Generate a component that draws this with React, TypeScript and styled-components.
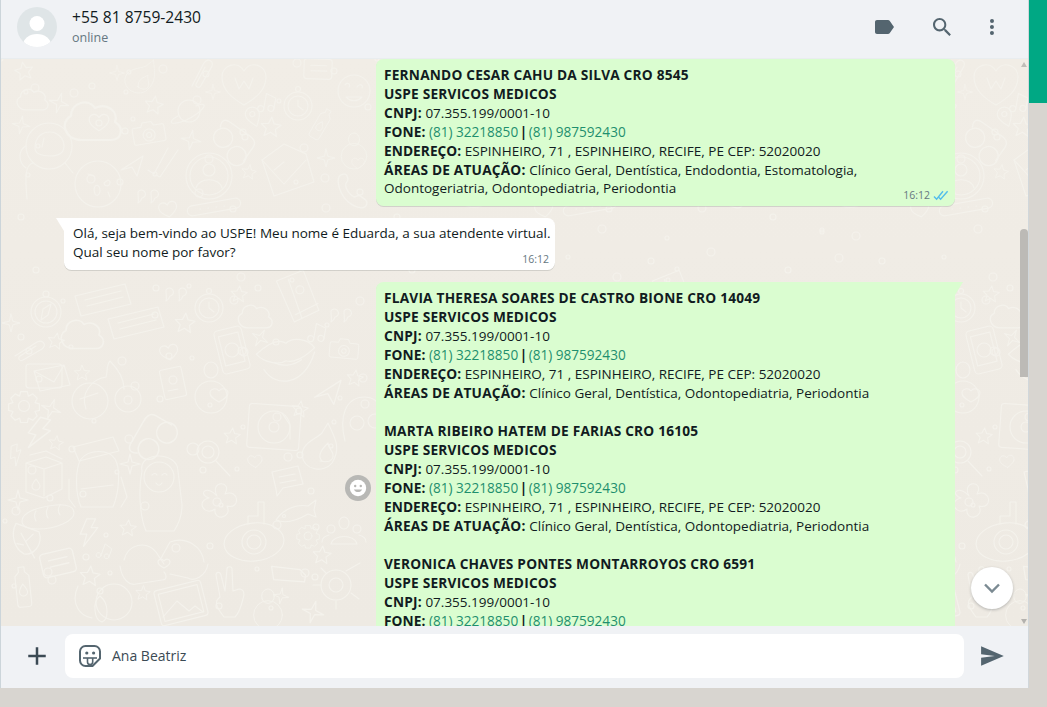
import React from "react";
import styled, { createGlobalStyle } from "styled-components";

const Global = createGlobalStyle`
  html, body { margin: 0; padding: 0; height: 707px; overflow: hidden; background: #d8d5d0; }
  body { font-family: "Open Sans", "Noto Sans", "Liberation Sans", sans-serif; }
  * { box-sizing: border-box; }
`;

const Page = styled.div`
  display: flex;
  align-items: flex-start;
  width: 1047px;
  height: 707px;
  background: #d8d5d0;
`;
const Panel = styled.main`
  width: 1029px;
  height: 688px;
  display: flex;
  flex-direction: column;
  border-left: 1px solid #ccd5da;
  border-right: 1px solid #d1d7db;
  background: #efeae2;
`;
const AccentStrip = styled.div`
  width: 18px;
  height: 103px;
  background: #00a884;
`;
const Header = styled.header`
  height: 59px;
  flex: none;
  display: flex;
  align-items: center;
  padding: 0 24px 4px 16px;
  background: #f0f2f5;
  border-bottom: 1px solid #e9edef;
`;
const Avatar = styled.svg`
  width: 40px;
  height: 40px;
  flex: none;
`;
const Contact = styled.div`
  margin-left: 15px;
  flex: 1;
  margin-top: -1px;
`;
const ContactName = styled.div`
  font-size: 15.6px;
  line-height: 21px;
  color: #111b21;
`;
const ContactStatus = styled.div`
  font-size: 12.5px;
  line-height: 19px;
  color: #667781;
`;
const IconSlot = styled.span<{ $gap?: number; $nudge?: number; $color?: string }>`
  display: flex;
  flex: none;
  justify-content: center;
  margin-left: ${(p) => p.$gap ?? 0}px;
  margin-top: ${(p) => p.$nudge ?? 0}px;
  color: ${(p) => p.$color ?? "#54656f"};
`;
const Chat = styled.section`
  position: relative;
  flex: 1;
  min-height: 0;
  overflow: hidden;
  background: linear-gradient(#f1ede6, #eeeae3);
`;
const Doodles = styled.svg`
  position: absolute;
  inset: 0;
  width: 100%;
  height: 100%;
`;
const Messages = styled.div`
  position: relative;
  display: flex;
  flex-direction: column;
  gap: 12px;
  padding: 0 73px 0 63px;
`;
const Bubble = styled.article<{ $out?: boolean; $tail?: boolean; $w: number }>`
  position: relative;
  flex: none;
  width: ${(p) => p.$w}px;
  align-self: ${(p) => (p.$out ? "flex-end" : "flex-start")};
  padding: 5.5px 6px 8.5px ${(p) => (p.$out ? 8 : 9)}px;
  font-size: 13.5px;
  line-height: 19px;
  color: #111b21;
  white-space: pre;
  background: ${(p) => (p.$out ? "#dafdd0" : "#ffffff")};
  border-radius: 7.5px;
  border-top-left-radius: ${(p) => (p.$tail && !p.$out ? 0 : 7.5)}px;
  border-top-right-radius: ${(p) => (p.$tail && p.$out ? 0 : 7.5)}px;
  box-shadow: 0 1px 0.5px rgba(11, 20, 26, 0.13);
  &::before {
    content: "";
    display: ${(p) => (p.$tail ? "block" : "none")};
    position: absolute;
    top: 0;
    width: 8px;
    height: 13px;
    background: inherit;
    ${(p) =>
      p.$out
        ? "right: -8px; clip-path: polygon(0 0, 100% 0, 0 100%);"
        : "left: -8px; clip-path: polygon(0 0, 100% 0, 100% 100%);"}
  }
`;
const Line = styled.div`
  height: 19px;
`;
const Strong = styled.b`
  font-weight: 700;
  font-size: 13.7px;
  letter-spacing: 0.2px;
`;
const Label = styled(Strong)`
  letter-spacing: 0.05px;
`;
const Phone = styled.span`
  font-size: 13.6px;
  color: #1f8f6e;
`;
const PhoneSeparator = styled.b`
  font-weight: 700;
  margin: 0 -2px;
`;
const Meta = styled.div`
  position: absolute;
  right: 6px;
  bottom: 3px;
  display: flex;
  align-items: center;
  gap: 3px;
  font-size: 10.5px;
  line-height: 15px;
  color: #667781;
`;
const ReactionBadge = styled.div`
  position: absolute;
  left: -31px;
  top: 193px;
  width: 26px;
  height: 26px;
  border-radius: 50%;
  background: #b8b8b5;
  display: flex;
  align-items: center;
  justify-content: center;
`;
const ScrollArrow = styled.div<{ $down?: boolean }>`
  position: absolute;
  right: 1px;
  ${(p) => (p.$down ? "bottom: 2px;" : "top: 3px;")}
  width: 0;
  height: 0;
  border-left: 3.5px solid transparent;
  border-right: 3.5px solid transparent;
  ${(p) => (p.$down ? "border-top: 5px solid #b4b2ae;" : "border-bottom: 5px solid #c0bdb8;")}
`;
const ScrollThumb = styled.div`
  position: absolute;
  right: 0;
  top: 170px;
  width: 8px;
  height: 148px;
  border-radius: 4px 4px 0 0;
  background: #bcbab6;
`;
const FloatingDown = styled.button`
  position: absolute;
  right: 15px;
  bottom: 17px;
  width: 42px;
  height: 42px;
  padding: 0;
  border: 0;
  border-radius: 50%;
  background: #fff;
  display: flex;
  align-items: center;
  justify-content: center;
  box-shadow: 0 1px 3px rgba(11, 20, 26, 0.25);
`;
const Footer = styled.footer`
  height: 62px;
  flex: none;
  display: flex;
  align-items: center;
  padding: 0 0 2px 21px;
  background: #f0f2f5;
`;
const Composer = styled.div`
  margin-left: 13px;
  width: 899px;
  height: 44px;
  flex: none;
  display: flex;
  align-items: center;
  padding: 0 0 1px 13px;
  gap: 10px;
  border-radius: 8px;
  background: #fff;
  font-size: 14px;
  color: #3b4a54;
`;

const contact = (name: string, areas: string[]) => (
  <>
    <Line><Strong>{name}</Strong></Line>
    <Line><Strong>USPE SERVICOS MEDICOS</Strong></Line>
    <Line><Strong>CNPJ:</Strong> 07.355.199/0001-10</Line>
    <Line><Label>FONE:</Label> <Phone>(81) 32218850</Phone> <PhoneSeparator>|</PhoneSeparator> <Phone>(81) 987592430</Phone></Line>
    <Line><Label>ENDEREÇO:</Label> ESPINHEIRO, 71 , ESPINHEIRO, RECIFE, PE CEP: 52020020</Line>
    {areas.map((a, i) => (
      <Line key={a}>{i === 0 && <Strong>ÁREAS DE ATUAÇÃO: </Strong>}{a}</Line>
    ))}
  </>
);

const AREAS = ["Clínico Geral, Dentística, Odontopediatria, Periodontia"];

/* Wallpaper doodles: each drawing is centred on 0,0 */
const SHAPES: Record<string, React.ReactNode> = {
  star: <path d="M0-9l2.6 6 6.4.6-4.8 4.2 1.4 6.4L0 4.8l-5.6 3.4L-4.2 1.8-9-2.4l6.4-.6z" />,
  spark: <path d="M0-10l2 8 8 2-8 2-2 8-2-8-8-2 8-2z" />,
  heart: <path d="M0 8c-5-3-9-6-9-10 0-5 6-7 9-2 3-5 9-3 9 2 0 4-4 7-9 10z" />,
  bigheart: <><path d="M0 23c-12-7-22-15-22-28 0-12 15-17 22-6 7-11 22-6 22 6 0 13-10 21-22 28z" /><path d="M-9-4l4 11 5-8 5 8 4-11" /></>,
  cloud: <path d="M-9 9c-8 0-11-9-5-12 0-7 9-9 12-4 6-3 12 2 10 7 5 3 3 9-2 9z" />,
  note: <><path d="M-28-6l50-12 6 20-50 12z" /><path d="M-18-2l36-9M-16 4l36-9" /></>,
  paper: <><rect x="-14" y="-10" width="28" height="20" rx="3" transform="rotate(-18)" /><path d="M-8-1l15-5M-6 4l15-5" /></>,
  camera: <><path d="M-14-8h7l2-4h9l2 4h8a2 2 0 0 1 2 2v13a2 2 0 0 1-2 2h-28a2 2 0 0 1-2-2V-6a2 2 0 0 1 2-2z" /><circle r="6" cy="1" /><circle r="2.5" cy="1" /></>,
  clock: <><circle r="14" /><circle r="10" /><path d="M0-6v6l5 4" /><circle cy="-17" r="2.5" /></>,
  face: <><circle r="16" /><path d="M-9-6c3-4 6 0 4 2M3-4c2-4 7-2 5 1M-8 6c5 5 11 5 16 0z" /></>,
  planet: <><circle r="11" /><path d="M-11 5c-6 3-8 6-6 7 3 1 12-1 20-6s13-10 12-12c-1-1-4-1-8 1" /></>,
  pin: <><path d="M0 11c-4-5-7-9-7-13a7 7 0 0 1 14 0c0 4-3 8-7 13z" /><circle cy="-2" r="2.5" /></>,
  music: <><path d="M-4 8V-8l10 3v11" /><circle cx="-7" cy="8" r="3" /><circle cx="3" cy="6" r="3" /></>,
  bottle: <><path d="M-3-20h6v5l4 4v28a3 3 0 0 1-3 3h-8a3 3 0 0 1-3-3v-28l4-4z" /><path d="M0-3c-3 4-4 6-4 8a4 4 0 0 0 8 0c0-2-1-4-4-8z" /></>,
  envelope: <><path d="M-26-6l22-16 22 10 8 28-40 14z" /><path d="M-26-6l22 24 22-24M-14 4L-4-4" /></>,
  mail: <><rect x="-20" y="-13" width="36" height="24" rx="3" /><path d="M-12-6l30-6 6 20-30 6zM-12-6l20 11 10-17" /></>,
  glasses: <><circle cx="-9" cy="3" r="8" /><circle cx="9" cy="9" r="8" /><path d="M-16-3c-3-6 0-8 4-8h20c6 0 8 2 8 6v14" /></>,
  profile: <><circle r="23" /><circle r="19" /><circle cy="-6" r="6" /><path d="M-13 12c3-11 23-11 26 0" /></>,
  person: <><ellipse cy="-12" rx="7" ry="8" /><circle cy="9" r="16" /></>,
  plane: <path d="M-12 6L10-8 4 12-1 3z" />,
  check: <><path d="M-16 8l6 4L4-14M-8 13l4 2L14-12" /></>,
  phone: <><rect x="-14" y="-22" width="28" height="44" rx="4" transform="rotate(-14)" /><rect x="-10" y="-16" width="20" height="30" transform="rotate(-14)" /><circle r="7" /></>,
  handset: <path d="M-8-14c-6 0-6 6-4 12 3 9 10 15 18 16 5 0 6-5 3-7l-4-3c-2-1-3 1-5 1-4-2-7-7-7-10 0-2 2-3 2-5l-1-3c-1-1-1-1-2-1z" />,
  quote: <><path d="M-10-7a4 4 0 1 1 4 6c-1 3-2 4-4 5 1-3 0-5 0-11zM3-7a4 4 0 1 1 4 6c-1 3-2 4-4 5 1-3 0-5 0-11z" /></>,
  band: <><rect x="-27" y="-5" width="54" height="10" rx="5" transform="rotate(-10)" /><path d="M-14 2h.5M-6 1h.5M2 0h.5M10-1h.5" /></>,
  astro: <><circle r="23" /><path d="M-14 2c0-12 8-16 15-16s14 6 14 14-6 10-14 10-15-2-15-8zM-23 0c-8 4-8 16 0 22M-16 17c-8 2-8 14-6 36M16 17l8 10" /><path d="M-5-8l-2 9" /></>,
  moon: <><circle r="23" /><path d="M-10-10l6 2M10-4a3 3 0 1 1-4 3zM-4 6a3 5 0 1 1 1 4zM10 8l2 5" /></>,
  compass: <><circle r="15" /><circle r="11" /><circle cy="-18" r="3" /><path d="M5-8L2 3-5 8l2-11z" /></>,
  map: <><path d="M-20-20l28-7 10 42-26 8zM-8-20l8 40" /><circle cx="2" cy="-8" r="4" /><path d="M-6 16l24-8" /></>,
  clip: <path d="M-14 6L8-8c6-3 10 3 5 7L-6 10c-3 2-6-2-3-4L7-4" />,
  lips: <><path d="M-27-8C-14-20-6-22 0-18 6-24 20-22 26-14 16-4 6 0 0-2-6 2-20 0-27-8z" /><path d="M-20 6C-10 22 16 22 26-10M-10 0c6 3 16 3 24-3" /></>,
  scooter: <><path d="M-18 22c-6-16 6-30 20-32 2-6 0-12 4-16 6 6 14 16 14 28" /><circle cx="-14" cy="14" r="18" /><circle cx="24" cy="12" r="13" /><path d="M-24 12l18-6" /></>,
  book: <><rect x="-11" y="-15" width="22" height="30" rx="2" transform="rotate(-12)" /><circle r="4" cy="-3" /><path d="M-5 8l10-2" /></>,
  personheart: <><ellipse cy="-22" rx="7" ry="8" /><circle cy="5" r="16" /><path d="M8 10c-5-3-9-5-9-9 0-4 6-6 9-2 3-4 9-2 9 2 0 4-4 6-9 9z" /></>,
  gear: <><circle r="5" /><path d="M-3-13h6l1 4 4-2 4 4-2 4 4 1v6l-4 1 2 4-4 4-4-2-1 4h-6l-1-4-4 2-4-4 2-4-4-1v-6l4-1-2-4 4-4 4 2z" /></>,
  vinyl: <><rect x="-26" y="-22" width="52" height="44" rx="3" transform="rotate(4)" /><circle r="16" /><circle r="5" /><path d="M8-14l8 12v14" /></>,
  headglass: <><path d="M-14 24C-20 0-14-20 6-20c14 0 22 14 20 44" /><circle cx="-2" cy="6" r="7" /><circle cx="16" cy="4" r="7" /></>,
  bolt: <path d="M-2-12L-8 2h6l-3 11L8-4H2l4-8z" />,
  flame: <><path d="M4-24c6 14 14 24 4 40C0 26-20 24-22 8c0-12 14-16 20-22 2-4 4-6 6-10z" /><path d="M-2 14C-8 8 0 0 4-4c0 6 8 10 4 16-3 4-8 3-12 2z" /></>,
  lens: <><circle r="11" /><circle r="6" /><circle cx="-15" cy="-3" r="6" /><path d="M8 9l14 15" /></>,
  backpack: <><path d="M-18-18c-6 10-6 34 0 48h32c6-14 8-38 2-48-6-10-26-10-34 0z" /><path d="M-26-30l40-10 6 14-40 10zM-30 2v20l6 8M22 0l6 20-6 10M-18 12l32-4" /></>,
  milk: <><path d="M-18-14l20-6 16 6v26l-18 9-18-6zM-18-14L0-8v27M0-8l18-6M-14-22L2-26l16 8" /><path d="M-8 2c-3 4-4 6-4 7a4 4 0 0 0 8 0c0-1-1-3-4-7z" /></>,
  baby: <><path d="M-16-22c-4-20 36-20 36 0l4 34c0 12-4 20-8 26h-28c-6-14-8-40-4-60z" /><circle cy="-16" cx="1" r="15" /><path d="M-6-18c2-2 4-2 5 0M4-18c2-2 4-2 5 0M-2-10c2 3 4 3 6 0" /></>,
  chat: <><path d="M-16-10l26-6 5 18-20 4-6 8-1-7z" /><path d="M-9-5l16-3M-8 1l16-3" /></>,
  flower: <><circle r="4" /><path d="M0-6c-8-16 16-16 8-2 14-6 16 16 2 12 6 12-14 16-12 3-10 8-20-8-6-11-12-4-2-14 8-2z" /></>,
  bread: <><path d="M-26 6c0-8 14-14 34-16 12-1 18 2 18 8 0 8-18 16-36 16-10 0-16-2-16-8z" /><path d="M-12-4c-2 3-2 6 0 10M0-8c-2 4-2 8 0 11M12-10c-2 3-2 7 0 10" /></>,
  fish: <><path d="M-18 8C-10-4 4-8 14-6l8-6-2 10 2 7-8-3C4 8-8 12-18 8z" /><circle cx="-10" cy="4" r="1.5" /></>,
  eye: <><ellipse cx="0" rx="30" ry="19" transform="rotate(-6)" /><circle r="12" /><circle r="7" /><path d="M-6-18v-8h10v-14l6 0v22" /></>,
  people: <><ellipse cy="-9" rx="5" ry="6" /><path d="M-13 12c2-10 24-10 26 0z" /><circle cx="-13" cy="-3" r="4" /><circle cx="13" cy="-3" r="4" /><path d="M-22 10c0-4 3-6 7-7M22 10c0-4-3-6-7-7" /></>,
  leaf: <><path d="M-12-16l22 4c6 12-2 22-10 22C-8 8-16-4-12-16zM-6-8l16 20M0-2l5-7M-2 2h-6" /></>,
  hands: <><path d="M-40 0c4-16 22-20 32-8l8 12M40 2c-2-16-18-26-34-20L-4 0" /><path d="M-44 6c2 14 10 20 16 18l26-4c6 0 4-6 2-8M44 4c-2 12-14 18-20 14L6 14" /><path d="M0 8c-4-2-6-4-6-6 0-3 4-4 6-1 2-3 6-2 6 1 0 2-2 4-6 6z" /></>,
  tag: <path d="M-15-6l26 3 5 5-1 6-28-2z" />,
  turtle: <><circle r="15" /><circle r="7" /><path d="M10-14l14-8M-15 0h-8M0 16v8M15 8l8 6M-10-12l-5-5" /></>,
  dog: <><circle cx="6" r="18" /><path d="M-8-6c-8 6-6 24 2 26 6-2 8-18-2-26zM-30-16c-8 18 2 30 14 32" /></>,
  picture: <><rect x="-24" y="-18" width="48" height="36" rx="3" transform="rotate(-14)" /><rect x="-20" y="-14" width="40" height="28" transform="rotate(-14)" /><path d="M-18 14L-4-2 8 8l6-5 8 6" /></>,
  peace: <path d="M-10 22c-6-8-10-14-6-18l2-2-4-22c0-3 4-4 5 0l4 16 2-22c0-3 5-3 5 0l1 22 6-2c5 0 6 5 4 10-2 8-4 14-8 18z" />,
};

const ITEMS: [string, number, number, number?, number?][] = [
  ["star", 23, 12, -10], ["spark", 116, 14, 0, 0.75], ["flame", 143, 18, 20, 0.8], ["clip", 200, 15, -30],
  ["bigheart", 243, 23], ["paper", 317, 10, 20], ["face", 353, 32], ["cloud", 35, 41, 0, 1.1], ["spark", 58, 44, 15],
  ["planet", 188, 52], ["star", 153, 46, 10], ["pin", 252, 57, -20], ["music", 268, 43, 10], ["clock", 297, 47],
  ["bottle", 320, 65, 30, 0.8], ["spark", 212, 33, 0, 0.75], ["cloud", 98, 63, 0, 2], ["heart", 98, 63, 0, 1.1],
  ["camera", 148, 75, -10], ["spark", 20, 66, 10, 0.9], ["astro", 48, 87], ["moon", 97, 125], ["glasses", 233, 82, 35, 1.2],
  ["star", 270, 68, 5, 1.1], ["spark", 190, 81, 10], ["envelope", 287, 107], ["spark", 325, 99, 0, 0.9],
  ["person", 353, 90, 0, 0.8], ["heart", 357, 104, 0, 0.7], ["profile", 208, 117], ["plane", 132, 105], ["check", 163, 103],
  ["star", 248, 113, 10, 0.8], ["handset", 353, 132, 0, 1.2], ["quote", 147, 140], ["heart", 167, 150, -10],
  ["band", 213, 148], ["compass", 45, 253], ["note", 102, 243], ["note", 135, 266], ["clock", 208, 249], ["map", 298, 239, -8],
  ["star", 238, 235, 5, 0.9], ["star", 184, 264, 5, 1.1], ["cloud", 258, 258, 0, 1.2], ["quote", 340, 259], ["quote", 175, 238],
  ["spark", 10, 264, 0, 0.9], ["cloud", 86, 276, 0, 1.5], ["star", 55, 282, 10, 0.9], ["clip", 28, 291], ["phone", 231, 291],
  ["spark", 259, 279, 30, 0.9], ["music", 318, 273, 10], ["camera", 343, 291, 5, 0.9], ["lips", 285, 304, 0, 1.1], ["heart", 168, 293, -10],
  ["mail", 45, 318], ["star", 81, 314, 0, 0.85], ["scooter", 103, 328], ["book", 172, 324], ["personheart", 210, 333],
  ["plane", 328, 331, 0, 1.2], ["star", 354, 319, 8, 0.9], ["gear", 23, 347, 0, 1.1], ["spark", 50, 350, 20], ["vinyl", 273, 368],
  ["headglass", 358, 358], ["star", 299, 350, 8, 0.9], ["glasses", 150, 378, -60, 1.3], ["lens", 207, 393], ["star", 231, 377, 5, 0.9],
  ["bolt", 38, 374, 15, 1.3], ["star", 55, 384, 10, 0.8], ["flame", 323, 388], ["bolt", 15, 396, -20, 0.8], ["heart", 254, 402, -5, 0.8],
  ["backpack", 98, 418], ["milk", 43, 418], ["spark", 129, 405], ["baby", 157, 434], ["chat", 287, 423], ["flower", 216, 443],
  ["spark", 17, 441], ["bread", 47, 456], ["fish", 293, 453], ["eye", 253, 483], ["gear", 307, 477, 0, 0.8], ["people", 343, 473],
  ["leaf", 25, 484, 10, 1.1], ["bolt", 88, 473, 0, 1.1], ["star", 127, 469, 5, 0.9], ["music", 105, 492, 20, 0.8], ["hands", 163, 501],
  ["paper", 57, 504, 5, 1.2], ["star", 321, 496, 5], ["bottle", 22, 528, -6], ["star", 89, 517, 5, 1.1], ["tag", 287, 514, 0, 1.1],
  ["turtle", 335, 526], ["dog", 107, 543], ["picture", 180, 544], ["peace", 233, 536], ["star", 142, 534, 5, 0.8],
  ["person", 267, 548, 0, 0.9], ["spark", 280, 537, 10, 0.8], ["spark", 312, 553, 15, 1.1],
];

/* Small bubbles scattered between the drawings */
const DOTS: [number, number, number][] = Array.from({ length: 110 }, (_, i) => {
  const x = (i * 97 + (i * i) % 37) % 376;
  const y = (i * 61 + (i * i * 3) % 53) % 567;
  return [x, y, 2 + (i * 7) % 3];
});

function Wallpaper() {
  return (
    <Doodles aria-hidden="true">
      <defs>
        <g id="wall-tile" fill="none" stroke="#f4f2ec" strokeWidth="1.1" strokeLinejoin="round" strokeLinecap="round">
          {DOTS.map(([x, y, r]) => <circle key={`${x}-${y}`} cx={x} cy={y} r={r} />)}
          {ITEMS.map(([name, x, y, rot = 0, scale = 1], i) => (
            <g key={i} transform={`translate(${x} ${y}) rotate(${rot}) scale(${scale})`}>{SHAPES[name]}</g>
          ))}
        </g>
      </defs>
      <use href="#wall-tile" />
      <use href="#wall-tile" x="376" />
      <use href="#wall-tile" x="752" />
    </Doodles>
  );
}

export default function App() {
  return (
    <Page>
      <Global />
      <Panel>
        <Header>
          <Avatar viewBox="0 0 40 40">
            <defs><clipPath id="av"><circle cx="20" cy="20" r="20" /></clipPath></defs>
            <circle cx="20" cy="20" r="20" fill="#dfe5e7" />
            <g clipPath="url(#av)" fill="#fff">
              <circle cx="20" cy="16.5" r="7.5" />
              <ellipse cx="20" cy="38" rx="14" ry="11" />
            </g>
          </Avatar>
          <Contact>
            <ContactName>+55 81 8759-2430</ContactName>
            <ContactStatus>online</ContactStatus>
          </Contact>
          <IconSlot>
            <svg width="24" height="24" viewBox="0 0 24 24" fill="currentColor"><path d="M17.63 5.84C17.27 5.33 16.67 5 16 5L5 5.01C3.9 5.01 3 5.9 3 7v10c0 1.1.9 1.99 2 1.99L16 19c.67 0 1.27-.33 1.63-.84L22 12l-4.37-6.16z" /></svg>
          </IconSlot>
          <IconSlot $gap={34}>
            <svg width="24" height="24" viewBox="0 0 24 24" fill="currentColor"><path d="M15.9 14.3H15l-.3-.3c1-1.1 1.6-2.7 1.6-4.3 0-3.7-3-6.7-6.7-6.7S3 6 3 9.7s3 6.7 6.7 6.7c1.6 0 3.2-.6 4.3-1.6l.3.3v.8l5.1 5.1 1.5-1.5-5-5.2zm-6.2 0c-2.6 0-4.6-2.1-4.6-4.6s2.1-4.6 4.6-4.6 4.6 2.1 4.6 4.6-2 4.6-4.6 4.6z" /></svg>
          </IconSlot>
          <IconSlot $gap={26} $nudge={2}>
            <svg width="24" height="24" viewBox="0 0 24 24" fill="currentColor"><path d="M12 7a2 2 0 1 0-.001-4.001A2 2 0 0 0 12 7zm0 2a2 2 0 1 0-.001 3.999A2 2 0 0 0 12 9zm0 6a2 2 0 1 0-.001 3.999A2 2 0 0 0 12 15z" /></svg>
          </IconSlot>
        </Header>
        <Chat>
          <Wallpaper />
          <Messages>
            <Bubble $out $w={579}>
              {contact("FERNANDO CESAR CAHU DA SILVA CRO 8545", [
                "Clínico Geral, Dentística, Endodontia, Estomatologia,",
                "Odontogeriatria, Odontopediatria, Periodontia",
              ])}
              <Meta>
                16:12
                <svg width="16" height="11" viewBox="0 0 16 11" fill="none" stroke="#53bdeb" strokeWidth="1.4">
                  <path d="M1 6.5l2.6 2.8L10 1.2M6 7.6l1.6 1.7L14.6 1.2" />
                </svg>
              </Meta>
            </Bubble>
            <Bubble $tail $w={491}>
              <Line>Olá, seja bem-vindo ao USPE! Meu nome é Eduarda, a sua atendente virtual.</Line>
              <Line>Qual seu nome por favor?</Line>
              <Meta>16:12</Meta>
            </Bubble>
            <Bubble $out $tail $w={579}>
              <ReactionBadge>
                <svg width="18" height="18" viewBox="0 0 18 18">
                  <circle cx="9" cy="9" r="8.2" fill="#fff" />
                  <circle cx="6.2" cy="7" r="1.2" fill="#b8b8b5" />
                  <circle cx="11.8" cy="7" r="1.2" fill="#b8b8b5" />
                  <path d="M4.8 10.5c1.6 3.4 6.8 3.4 8.4 0z" fill="#b8b8b5" />
                </svg>
              </ReactionBadge>
              {contact("FLAVIA THERESA SOARES DE CASTRO BIONE CRO 14049", AREAS)}
              <Line />
              {contact("MARTA RIBEIRO HATEM DE FARIAS CRO 16105", AREAS)}
              <Line />
              {contact("VERONICA CHAVES PONTES MONTARROYOS CRO 6591", AREAS)}
            </Bubble>
          </Messages>
          <ScrollArrow />
          <ScrollThumb />
          <ScrollArrow $down />
          <FloatingDown aria-label="Ir para o fim">
            <svg width="24" height="24" viewBox="0 0 24 24" fill="none" stroke="#7b8a92" strokeWidth="2.4">
              <path d="M5 8.5l7 7 7-7" />
            </svg>
          </FloatingDown>
        </Chat>
        <Footer>
          <IconSlot $color="#3b4a54">
            <svg width="30" height="30" viewBox="0 0 24 24" fill="currentColor"><path d="M19 13h-6v6h-2v-6H5v-2h6V5h2v6h6v2z" /></svg>
          </IconSlot>
          <Composer>
            <svg width="24" height="24" viewBox="0 0 24 24" fill="none" stroke="#54656f" strokeWidth="2" strokeLinejoin="round">
              <path d="M7.500 2h9A5.500 5.500 0 0 1 22 7.500v7L14.500 22h-7A5.500 5.500 0 0 1 2 16.500v-9A5.500 5.500 0 0 1 7.500 2z" />
              <circle cx="8.800" cy="9" r="1.600" fill="#54656f" stroke="none" />
              <circle cx="15.600" cy="9" r="1.600" fill="#54656f" stroke="none" />
              <path d="M5 14h14" strokeWidth="1.6" />
              <path d="M9.500 14v4a2.600 2.600 0 0 0 5.200 0v-4" strokeWidth="1.6" />
            </svg>
            Ana Beatriz
          </Composer>
          <IconSlot $gap={16}>
            <svg width="24" height="24" viewBox="0 0 24 24" fill="currentColor"><path d="M1.101 21.757 23.8 12.028 1.101 2.3l.011 7.912 13.623 1.816-13.623 1.817-.011 7.912z" /></svg>
          </IconSlot>
        </Footer>
      </Panel>
      <AccentStrip />
    </Page>
  );
}
